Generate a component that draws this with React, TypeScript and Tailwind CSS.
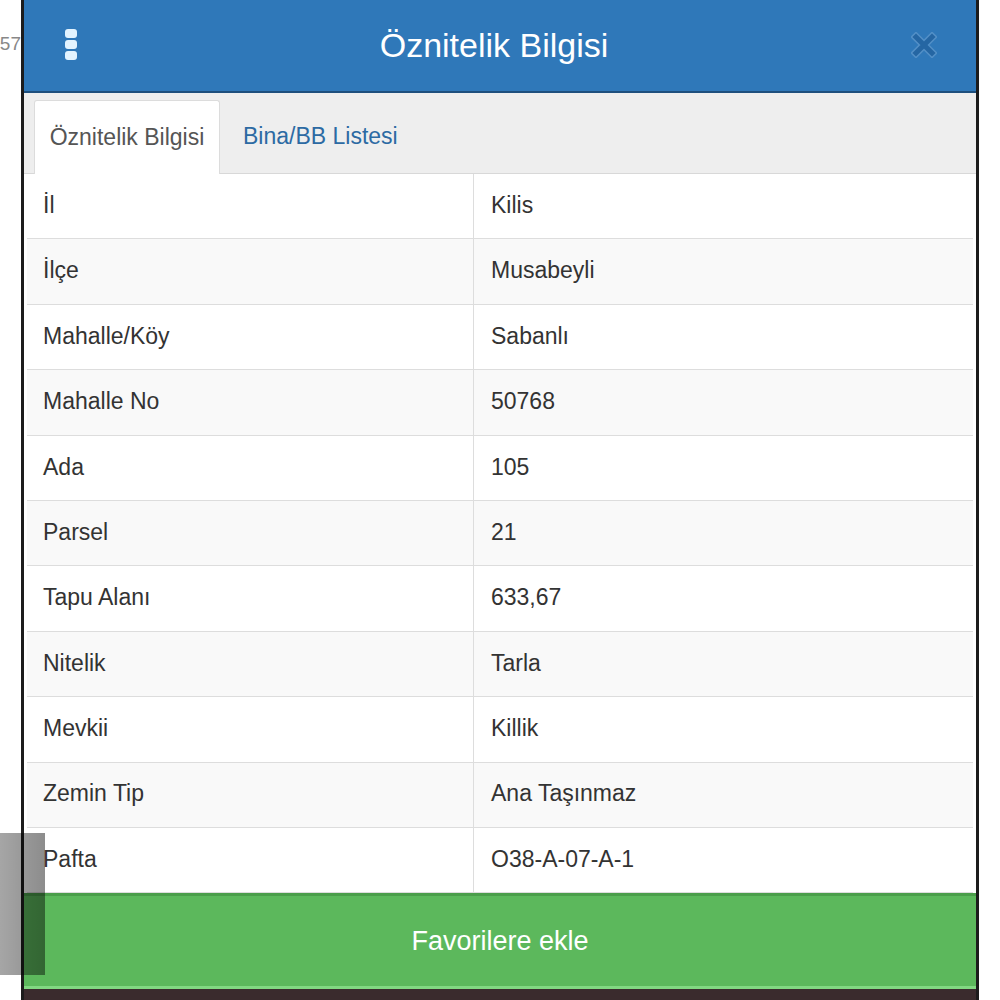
import React from 'react';

const rows: [string, string][] = [
  ['İl', 'Kilis'],
  ['İlçe', 'Musabeyli'],
  ['Mahalle/Köy', 'Sabanlı'],
  ['Mahalle No', '50768'],
  ['Ada', '105'],
  ['Parsel', '21'],
  ['Tapu Alanı', '633,67'],
  ['Nitelik', 'Tarla'],
  ['Mevkii', 'Killik'],
  ['Zemin Tip', 'Ana Taşınmaz'],
  ['Pafta', 'O38-A-07-A-1'],
];

const App: React.FC = () => {
  return (
    <div className="relative flex w-[1000px] h-[1000px] bg-white overflow-hidden [font-family:'Liberation_Sans',Arial,sans-serif]">
      {/* left page gutter */}
      <div className="w-[21px] shrink-0">
        <div className="flex justify-end mt-[34px] text-[19px] text-[#888] leading-none whitespace-nowrap">57</div>
      </div>

      {/* Modal */}
      <div className="flex flex-col w-[958px] shrink-0 border-x-[3px] border-[#1c1c1c]">
        {/* Header */}
        <div className="flex items-center h-[93px] bg-[#2f78b9] border-b-2 border-[#1e4f7d] px-[41px]">
          <div className="flex flex-col gap-[2px] w-[12px] -mt-[2px]">
            <span className="h-[9px] rounded-[3px] bg-[#e2f3ff]" />
            <span className="h-[9px] rounded-[3px] bg-[#e2f3ff]" />
            <span className="h-[9px] rounded-[3px] bg-[#e2f3ff]" />
          </div>
          <h1 className="flex-1 text-center text-[34px] text-white leading-none -mt-[2px]">Öznitelik Bilgisi</h1>
          <svg width="26" height="26" viewBox="0 0 26 26" className="-mt-[2px] -mr-[2px]">
            <path d="M5 5 L21 21 M21 5 L5 21" stroke="#6a9fd0" strokeWidth="8" strokeLinecap="square" opacity="0.6" />
            <path d="M5 5 L21 21 M21 5 L5 21" stroke="#2566a3" strokeWidth="5" strokeLinecap="square" />
          </svg>
        </div>

        {/* Tabs */}
        <div className="flex items-end h-[81px] bg-[#eeeeee] border-b border-[#d8d8d8] pl-[10px]">
          <div className="flex items-center justify-center w-[186px] h-[74px] bg-white border border-b-0 border-[#dcdcdc] rounded-t-[3px] -mb-px text-[23px] text-[#555]">
            Öznitelik Bilgisi
          </div>
          <div className="flex items-center h-[74px] pl-[23px] text-[23px] text-[#2c6aa3]">Bina/BB Listesi</div>
        </div>

        {/* Table */}
        <div className="flex flex-col px-[3px]">
          {rows.map(([k, v], i) => (
            <div
              key={k}
              className={`flex h-[65.4px] border-b border-[#dddddd] text-[23px] text-[#333] ${i % 2 === 1 ? 'bg-[#f9f9f9]' : 'bg-white'}`}
            >
              <div className="flex items-center w-[447px] pl-[16px] pb-[2px] border-r border-[#dddddd]">{k}</div>
              <div className="flex items-center flex-1 pl-[17px] pb-[2px]">{v}</div>
            </div>
          ))}
        </div>

        {/* Button */}
        <button className="flex items-center justify-center h-[96px] bg-[#5cb85c] border-t-[3px] border-[#4a9e4a] border-b-[3px] border-b-[#82d882] text-[27px] text-white">
          Favorilere ekle
        </button>
        <div className="flex-1 bg-[#3a2b2d]" />
      </div>

      <div className="flex-1 bg-white" />

      {/* gray overlay at bottom left */}
      <div className="absolute left-0 top-[833px] w-[45px] h-[142px] bg-gradient-to-r from-black/35 to-black/45" />
    </div>
  );
};

export default App;
